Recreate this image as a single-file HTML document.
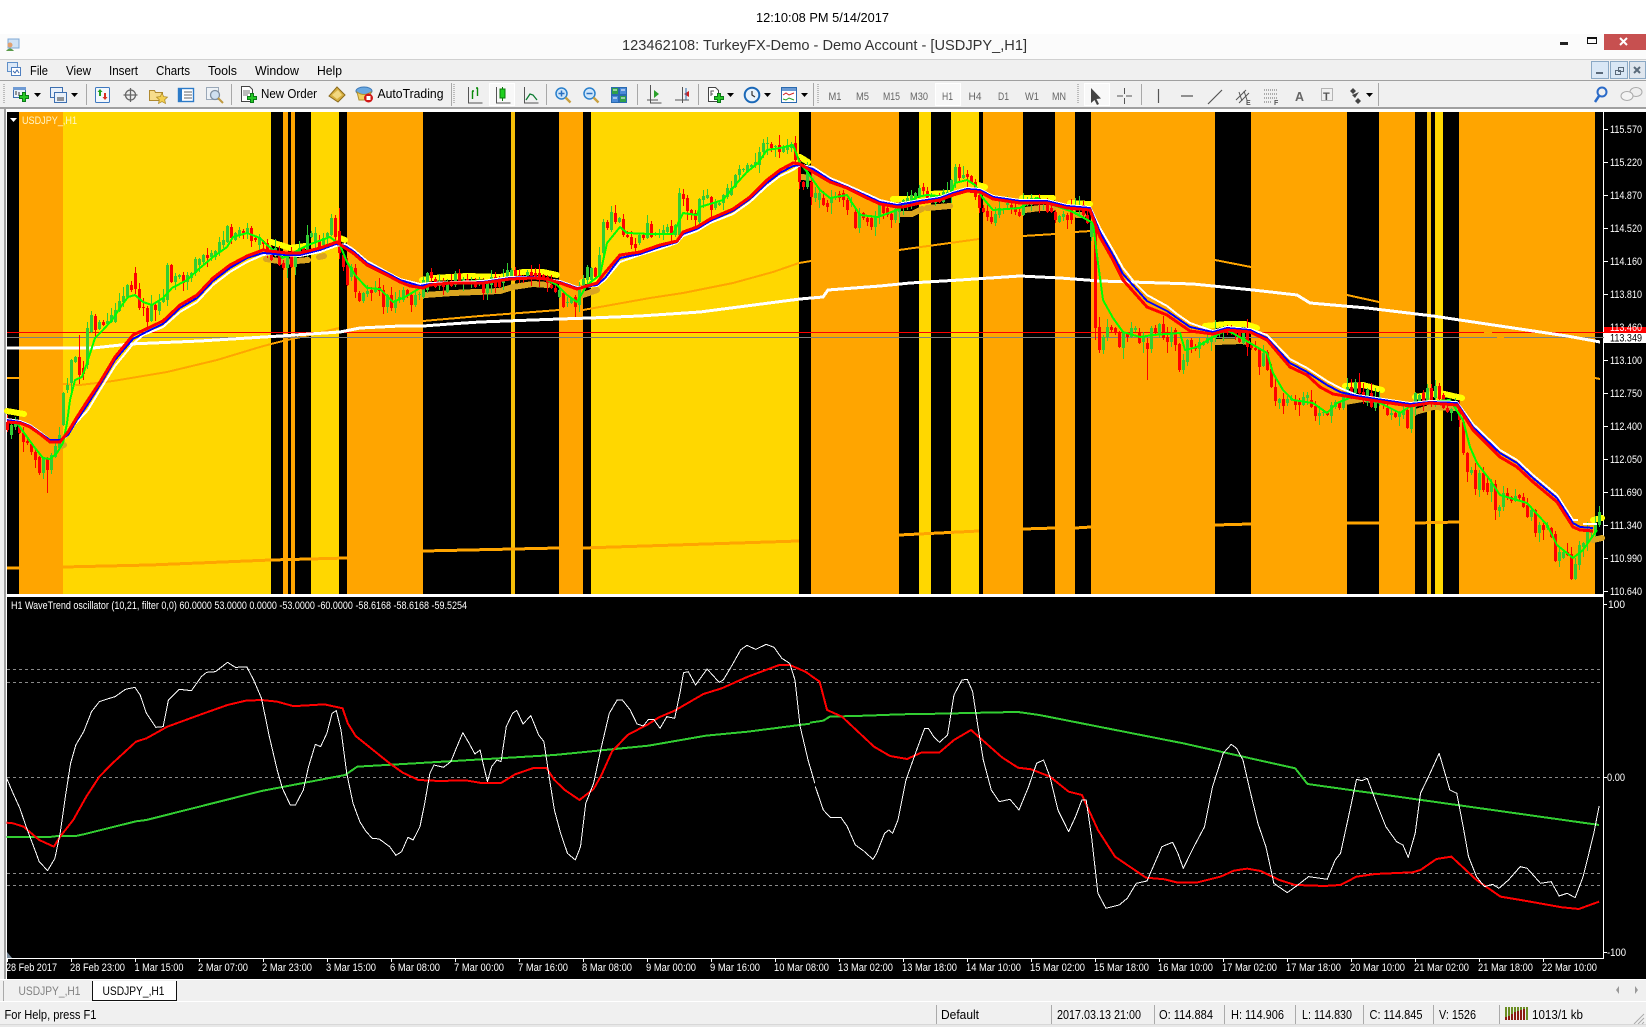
<!DOCTYPE html>
<html><head><meta charset="utf-8"><title>USDJPY H1</title>
<style>
html,body{margin:0;padding:0;background:#fff;width:1646px;height:1027px;overflow:hidden}
svg{display:block;font-family:"Liberation Sans",Arial,sans-serif}
.ax{fill:#fff;font-size:11px}
.mn{fill:#000;font-size:13px}
.tf{fill:#666;font-size:11px}
polyline{fill:none;stroke-linejoin:round;shape-rendering:crispEdges}
.vn{vector-effect:non-scaling-stroke}
</style></head><body>
<svg xmlns="http://www.w3.org/2000/svg" width="1646" height="1027" viewBox="0 0 1646 1027">
<defs>
<path id="plus" d="M3.5.5h3v3h3v3h-3v3h-3v-3h-3v-3h3z" fill="#26c826" stroke="#0b7a18"/>
<path id="dd" d="M0 0h7l-3.5 4z" fill="#000"/>
</defs>
<rect width="1646" height="1027" fill="#f0f0f0"/>
<rect width="1646" height="34" fill="#fff"/>
<rect y="34" width="1646" height="25" fill="#fbfbfb"/>
<rect y="59" width="1646" height="1" fill="#d0d0d0"/>
<rect y="80" width="1646" height="1" fill="#a0a0a0"/>
<rect y="107" width="1646" height="2" fill="#a0a0a0"/>
<text x="756" y="22" font-size="13" fill="#000" textLength="133" lengthAdjust="spacingAndGlyphs">12:10:08 PM 5/14/2017</text>
<text x="622" y="50" font-size="15" fill="#333" textLength="405" lengthAdjust="spacingAndGlyphs">123462108: TurkeyFX-Demo - Demo Account - [USDJPY_,H1]</text>
<!-- app icon -->
<g transform="translate(5,38)"><rect x="3" y="1" width="11" height="9" fill="#cfe2f5" stroke="#7fa8d4"/><circle cx="5" cy="7" r="2.5" fill="#e0a070"/><path d="M1 13q4-5 8 0z" fill="#5a9a4a"/></g>
<!-- window buttons -->
<rect x="1560" y="42" width="8" height="3" fill="#222"/>
<rect x="1587.5" y="37.5" width="9" height="6" fill="none" stroke="#111"/><rect x="1587" y="37" width="10" height="2" fill="#111"/>
<rect x="1604" y="34" width="42" height="16" fill="#c75050"/>
<path d="M1620 38l7 7M1627 38l-7 7" stroke="#fff" stroke-width="2"/>
<!-- menu -->
<g transform="translate(7,62)"><rect x=".5" y=".5" width="10" height="9" fill="#dbe8f7" stroke="#5f8fc8"/><rect x="4.5" y="5.5" width="9" height="8" fill="#fff" stroke="#4f7fc0"/><path d="M6 9l2 2 2-3 2 3" stroke="#3a6ab0" fill="none"/></g>
<g class="mn">
<text x="30" y="75" textLength="18" lengthAdjust="spacingAndGlyphs">File</text>
<text x="66" y="75" textLength="25" lengthAdjust="spacingAndGlyphs">View</text>
<text x="109" y="75" textLength="29" lengthAdjust="spacingAndGlyphs">Insert</text>
<text x="156" y="75" textLength="34" lengthAdjust="spacingAndGlyphs">Charts</text>
<text x="208" y="75" textLength="29" lengthAdjust="spacingAndGlyphs">Tools</text>
<text x="255" y="75" textLength="44" lengthAdjust="spacingAndGlyphs">Window</text>
<text x="317" y="75" textLength="25" lengthAdjust="spacingAndGlyphs">Help</text>
</g>
<!-- MDI buttons -->
<g stroke="#8aa8c4" fill="#d9e7f5"><rect x="1591.5" y="61.5" width="17" height="17"/><rect x="1610.5" y="61.5" width="17" height="17"/><rect x="1629.5" y="61.5" width="16" height="17" fill="#dfe6ee"/></g>
<rect x="1596" y="72" width="7" height="2" fill="#5a6a7a"/>
<path d="M1618.5 67.5h5v4h-5zM1615.5 70.5h5v4h-5z" fill="#d9e7f5" stroke="#5a6a7a"/>
<path d="M1634 67l6 6M1640 67l-6 6" stroke="#5a6a7a" stroke-width="2"/>
<!-- toolbar separators -->
<g fill="#a8a8a8">
<rect x="86" y="84" width="1" height="21"/><rect x="231" y="84" width="1" height="21"/><rect x="546" y="84" width="1" height="21"/><rect x="637" y="84" width="1" height="21"/><rect x="698" y="84" width="1" height="21"/><rect x="813" y="83" width="1" height="23"/><rect x="1141" y="84" width="1" height="21"/><rect x="1378" y="83" width="1" height="23"/><rect x="451" y="83" width="1" height="23"/>
</g>
<path d="M4 84v20M454 84v20M818 84v20M1078 84v20" stroke="#bbb" stroke-width="2" stroke-dasharray="1 1"/>
<!-- highlighted buttons -->
<g fill="#f8f8f8" stroke="#fff"><rect x="489.5" y="83.5" width="25" height="22"/><rect x="935.5" y="83.5" width="25" height="22"/><rect x="1084.5" y="83.5" width="25" height="22"/></g>
<!-- new chart -->
<g transform="translate(13,87)"><rect x=".5" y=".5" width="12" height="10" fill="#eaf2fb" stroke="#3d6fb0"/><rect x="0" y="0" width="13" height="3" fill="#6f9bd4"/><path d="M3 8V4M6 9V5" stroke="#333"/><use href="#plus" x="6" y="5"/></g>
<use href="#dd" x="34" y="93"/>
<g transform="translate(50,87)"><rect x=".5" y=".5" width="12" height="10" fill="#e8f0fa" stroke="#3d6fb0"/><rect x="4.5" y="5.5" width="12" height="10" fill="#e8f0fa" stroke="#3d6fb0"/><path d="M7 11h7M7 13h7" stroke="#333"/></g>
<use href="#dd" x="71" y="93"/>
<!-- market watch -->
<g transform="translate(95,87)"><rect x=".5" y=".5" width="14" height="15" fill="#f2f7fd" stroke="#3d78c0" rx="1"/><path d="M4 9V5H2.5l2.5-3 2.5 3H6v4z" fill="#1ea01e"/><path d="M9 6v4H7.5l2.5 3 2.5-3H11V6z" fill="#d83020"/></g>
<!-- navigator crosshair -->
<g transform="translate(123,87)" fill="none" stroke="#666" stroke-width="1.3"><circle cx="7.5" cy="8" r="5"/><path d="M7.5 1v14M.5 8h14"/></g>
<!-- folder star -->
<g transform="translate(149,87)"><path d="M.5 3.5h5l1 2h7v8H.5z" fill="#f6dc8c" stroke="#b08a30"/><path d="M13 6l1.7 3.6 3.8.5-2.8 2.6.8 3.8-3.5-1.9-3.5 1.9.8-3.8-2.8-2.6 3.8-.5z" fill="#f3cf50" stroke="#a88420" stroke-width=".7"/></g>
<!-- book -->
<g transform="translate(178,87)"><rect x=".5" y="1.5" width="15" height="13" fill="#fff" stroke="#2d7bc8" stroke-width="1.4"/><rect x="1" y="2" width="3" height="12" fill="#2d7bc8"/><path d="M6 5h8M6 8h8M6 11h8" stroke="#666"/></g>
<!-- strategy tester -->
<g transform="translate(206,87)"><rect x=".5" y=".5" width="12" height="12" fill="#eef2f6" stroke="#9aa8b8"/><circle cx="9" cy="8" r="4.5" fill="#cfe0f0" stroke="#7f8fa0" stroke-width="1.3"/><path d="M12 11l5 5" stroke="#c09a40" stroke-width="2"/></g>
<!-- new order -->
<g transform="translate(241,86)"><path d="M.5.5h8l3 3v12H.5z" fill="#fff" stroke="#444"/><path d="M2 5h7M2 7h7M2 9h5" stroke="#777"/><use href="#plus" x="6" y="7"/></g>
<text x="261" y="98" font-size="12.5" fill="#000" textLength="56" lengthAdjust="spacingAndGlyphs">New Order</text>
<!-- history diamond -->
<path d="M337 87l8 8-7 7-9-6z" fill="#d8b040" stroke="#8a6a1c"/><path d="M332 95l6-5 4 5-5 4z" fill="#f2d880"/>
<!-- autotrading -->
<g transform="translate(356,86)"><ellipse cx="8" cy="5" rx="8" ry="4" fill="#6aa8e0" stroke="#3a78b8"/><path d="M1 6q7 5 14 0l-2 8H3z" fill="#f0d060" stroke="#b09030"/><circle cx="12.5" cy="12" r="4.5" fill="#d01818"/><rect x="10.5" y="10" width="4" height="4" fill="#fff"/></g>
<text x="377.5" y="98" font-size="12.5" fill="#000" textLength="66" lengthAdjust="spacingAndGlyphs">AutoTrading</text>
<!-- chart types -->
<g fill="none" stroke="#555"><path d="M468.5 87v16h14M463 103h0"/><path d="M496.5 87v16h14"/><path d="M524.5 87v16h14"/></g>
<path d="M472.5 99v-8M477.5 96v-8M472 91h2M476 88h2" stroke="#0a8a0a" stroke-width="1.4" fill="none"/>
<path d="M502.5 87v14" stroke="#0a7a0a"/><rect x="500" y="89" width="5" height="9" fill="#20d020" stroke="#0a7a0a"/>
<path d="M526 100l4-6 3 1 4 5" stroke="#0a7a30" fill="none" stroke-width="1.3"/>
<!-- zoom -->
<g transform="translate(555,87)"><circle cx="6.5" cy="6.5" r="5.5" fill="#cfe6fa" stroke="#2a80cc" stroke-width="1.5"/><path d="M3.5 6.5h6M6.5 3.5v6" stroke="#2a70c0" stroke-width="1.5"/><path d="M10.5 10.5l5 5" stroke="#c8a040" stroke-width="2.4"/></g>
<g transform="translate(583,87)"><circle cx="6.5" cy="6.5" r="5.5" fill="#cfe6fa" stroke="#2a80cc" stroke-width="1.5"/><path d="M3.5 6.5h6" stroke="#2a70c0" stroke-width="1.5"/><path d="M10.5 10.5l5 5" stroke="#c8a040" stroke-width="2.4"/></g>
<!-- tile -->
<g transform="translate(611,87)" stroke="#2a6ab0"><rect x=".5" y=".5" width="7" height="7" fill="#2fa04a"/><rect x="8.5" y=".5" width="7" height="7" fill="#4a8ad8"/><rect x=".5" y="8.5" width="7" height="7" fill="#4a8ad8"/><rect x="8.5" y="8.5" width="7" height="7" fill="#2fa04a"/><path d="M2 3h4M10 3h4M2 11h4M10 11h4" stroke="#fff"/></g>
<!-- autoscroll & shift -->
<path d="M650.5 85v18h11M647 100h11M675 100h14M682.5 87v16" stroke="#555" fill="none"/>
<path d="M654 90l5 4-5 4z" fill="#2aa02a"/><path d="M689 91v6l-5-3z" fill="#d02020"/><path d="M686 88v12" stroke="#2a6ab0"/>
<!-- indicators -->
<g transform="translate(708,87)"><path d="M.5.5h7l3 3v11H.5z" fill="#fff" stroke="#444"/><path d="M3 9V4h3M3 7h2" stroke="#555" fill="none"/><use href="#plus" x="6" y="6"/></g>
<use href="#dd" x="727" y="93"/>
<!-- clock -->
<g transform="translate(744,87)"><circle cx="8" cy="8" r="7.3" fill="#e8f2fb" stroke="#1a68b8" stroke-width="2"/><path d="M8 4v4l3 2" stroke="#333" fill="none" stroke-width="1.2"/></g>
<use href="#dd" x="764" y="93"/>
<!-- templates -->
<g transform="translate(781,87)"><rect x=".5" y=".5" width="15" height="15" fill="#fff" stroke="#2a6ab0"/><rect x="1" y="1" width="14" height="3" fill="#6a9ad4"/><path d="M2 8l3-2 3 2 5-2" stroke="#d02020" fill="none"/><path d="M2 12l3 1 3-2 5 2" stroke="#20a020" fill="none"/></g>
<use href="#dd" x="801" y="93"/>
<!-- timeframes -->
<g class="tf">
<text x="828.5" y="100" textLength="13" lengthAdjust="spacingAndGlyphs">M1</text>
<text x="856" y="100" textLength="13" lengthAdjust="spacingAndGlyphs">M5</text>
<text x="883" y="100" textLength="17" lengthAdjust="spacingAndGlyphs">M15</text>
<text x="910" y="100" textLength="18" lengthAdjust="spacingAndGlyphs">M30</text>
<text x="942" y="100" textLength="11" lengthAdjust="spacingAndGlyphs">H1</text>
<text x="968.5" y="100" textLength="13" lengthAdjust="spacingAndGlyphs">H4</text>
<text x="998" y="100" textLength="11" lengthAdjust="spacingAndGlyphs">D1</text>
<text x="1025" y="100" textLength="14" lengthAdjust="spacingAndGlyphs">W1</text>
<text x="1052" y="100" textLength="14" lengthAdjust="spacingAndGlyphs">MN</text>
</g>
<!-- draw tools -->
<path d="M1091 88l0 15 3.5-3 2.5 5 2-1-2.500-5 4.500-.5z" fill="#444"/>
<path d="M1124.500 88v6M1124.500 98v6M1117 96h6M1126 96h6" stroke="#555" fill="none"/>
<path d="M1158.500 89v14M1181 96h12M1208 104l14-14" stroke="#555" fill="none" stroke-width="1.2"/>
<path d="M1236 100l10-10M1239 103l10-10M1239 92l3 9M1244 91l3 9" stroke="#555" fill="none"/>
<text x="1246" y="105" font-size="7" font-weight="bold" fill="#555">E</text>
<path d="M1264 90h13M1264 94h13M1264 98h13M1264 102h8" stroke="#666" stroke-dasharray="1 1"/>
<text x="1274" y="105" font-size="7" font-weight="bold" fill="#555">F</text>
<text x="1295" y="101" font-size="13" font-weight="bold" fill="#666" textLength="9" lengthAdjust="spacingAndGlyphs">A</text>
<rect x="1321.500" y="88.500" width="11" height="12" fill="none" stroke="#777" stroke-dasharray="1 1"/>
<text x="1323" y="100" font-size="11" font-weight="bold" fill="#555">T</text>
<path d="M1353 88l3 3-3 3-3-3zM1358 98l3 3-3 3-3-3zM1352 95l3 3 4-6" fill="#444"/>
<use href="#dd" x="1366" y="93"/>
<circle cx="1602" cy="92" r="4.500" fill="none" stroke="#2a6ac8" stroke-width="2"/><path d="M1599 96l-4 6" stroke="#2a6ac8" stroke-width="2.500"/>
<ellipse cx="1636" cy="92" rx="6" ry="4.500" fill="#eee" stroke="#aaa"/><ellipse cx="1627" cy="96" rx="6" ry="4.500" fill="#f4f4f4" stroke="#aaa"/>

<!-- chart frame -->
<rect x="4" y="109" width="1642" height="872" fill="#fff"/>
<rect x="4" y="109" width="2" height="872" fill="#a0a0a0"/>
<rect x="7" y="112" width="1639" height="482" fill="#000"/>
<rect x="7" y="597" width="1639" height="382" fill="#000"/>
<rect x="1604" y="594" width="42" height="3" fill="#000"/>
<rect x="1603" y="111" width="1" height="483" fill="#fff"/>
<rect x="1603" y="597" width="1" height="361" fill="#fff"/>
<rect x="7" y="594" width="1596" height="1" fill="#fff"/><rect x="7" y="596" width="1597" height="1" fill="#fff"/>

<!-- background bands -->
<g shape-rendering="crispEdges">
<g fill="#ffa500">
<rect x="19" y="112" width="44" height="482"/><rect x="283" y="112" width="5" height="482"/><rect x="291" y="112" width="4" height="482"/><rect x="347" y="112" width="76" height="482"/><rect x="559" y="112" width="24" height="482"/><rect x="811" y="112" width="88" height="482"/><rect x="983" y="112" width="40" height="482"/><rect x="1055" y="112" width="20" height="482"/><rect x="1091" y="112" width="124" height="482"/><rect x="1251" y="112" width="96" height="482"/><rect x="1379" y="112" width="36" height="482"/><rect x="1459" y="112" width="136" height="482"/>
</g>
<g fill="#ffd700">
<rect x="63" y="112" width="208" height="482"/><rect x="311" y="112" width="28" height="482"/><rect x="591" y="112" width="208" height="482"/><rect x="919" y="112" width="12" height="482"/><rect x="951" y="112" width="28" height="482"/><rect x="1435" y="112" width="8" height="482"/>
</g>
<g fill="#f7bf08"><rect x="511" y="112" width="4" height="482"/><rect x="1427" y="112" width="4" height="482"/></g>
</g>

<!-- long orange MA -->
<g stroke="#ffa500" stroke-width="2">
<polyline points="7,378 19,378"/>
<polyline points="63,384 80,385 113,381 167,372 217,360 260,347 271,344"/>
<polyline points="271,344 287,340 310,335 339,328"/>
<polyline points="423,321 480,316 559,310"/>
<polyline points="583,310 650,298 683,293 733,283 773,272 799,263 811,261"/>
<polyline points="899,250 979,239"/><polyline points="1023,236 1055,234"/><polyline points="1075,232 1091,231"/>
<polyline points="1215,260 1251,267"/><polyline points="1347,295 1379,302"/><polyline points="1595,378 1600,379"/>
</g>
<g stroke="#ffa500" stroke-width="3">
<polyline points="7,568 19,568"/>
<polyline points="63,567 150,565 271,560 347,558"/>
<polyline points="423,551 559,548"/><polyline points="583,548 799,541"/>
<polyline points="899,535 979,531"/><polyline points="1023,529 1055,528"/><polyline points="1075,528 1091,527"/>
<polyline points="1215,525 1251,524"/><polyline points="1347,523 1379,523"/><polyline points="1415,523 1459,522"/>
</g>
<!-- gold / yellow envelope -->
<g stroke="#daa520" stroke-width="6" stroke-linecap="round">
<polyline points="62,446 64,445"/>
<polyline points="266,259 285,262 308,260"/><polyline points="319,257 324,256"/>
<polyline points="425,295 453,293 500,291 513,287 533,284 548,285"/><polyline points="583,295 597,290"/>
<polyline points="802,177 812,178"/>
<polyline points="898,214 912,214 922,209"/><polyline points="927,208 950,206"/>
<polyline points="1025,210 1040,208 1053,208"/><polyline points="1077,215 1083,215"/>
<polyline points="1215,342 1243,341 1247,342"/>
<polyline points="1345,402 1363,399 1372,400"/>
<polyline points="1415,412 1433,407 1457,408"/>
<polyline points="1593,540 1602,538"/>
</g>
<g stroke="#ffff00" stroke-width="6" stroke-linecap="round">
<polyline points="7,411 24,414"/>
<polyline points="271,242 290,248 305,246"/><polyline points="340,238 345,240"/>
<polyline points="422,280 433,278 467,276 500,277 523,272 543,272 557,275"/><polyline points="582,282 598,278"/>
<polyline points="800,157 808,162"/>
<polyline points="893,199 916,199"/><polyline points="928,194 950,193"/><polyline points="978,185 985,187"/>
<polyline points="1022,198 1053,198"/><polyline points="1070,203 1090,204"/>
<polyline points="1205,326 1227,324 1245,324 1257,328"/>
<polyline points="1345,386 1363,385 1382,390"/>
<polyline points="1415,397 1440,393 1462,398"/>
<polyline points="1593,520 1602,518"/>
</g>
<!-- horizontal price lines -->
<path d="M7 332.500H1484M1492 332.500H1604" stroke="#f00" stroke-width="1"/>
<path d="M7 337.500H1497M1504 337.500H1604" stroke="#808080" stroke-width="1"/>
<!-- long white MA -->
<polyline stroke="#fff" stroke-width="3" points="7,348 93,348 130,344 200,341 280,336 340,332 360,328 400,326 423,326 450,324 480,322 533,320 560,319 590,318 640,316 700,312 800,299 823,297 828,290 880,286 910,283 960,280 1020,276 1060,278 1100,281 1193,284 1253,290 1297,295 1310,303 1367,308 1433,316 1500,326 1567,336 1600,342"/>
<g id="candles" shape-rendering="crispEdges"></g>
<!-- green fast line -->
<polyline stroke="#0f0" stroke-width="2" points="7,420 17,423 27,437 35,448 43,458 50,459 57,453 63,443 67,423 70,400 75,380 82,377 87,363 95,338 103,330 112,320 122,305 128,297 135,295 143,302 152,305 163,298 172,288 187,280 200,268 213,257 227,247 233,237 247,233 260,238 267,245 283,258 293,253 308,245 330,237 340,245 347,262 355,275 367,288 380,289 393,302 405,297 420,288 433,283 500,280 543,278 557,285 567,295 577,302 587,285 600,275 607,243 620,227 627,233 650,234 673,234 683,213 697,215 700,207 723,200 737,183 747,172 758,163 767,150 780,148 793,145 800,163 808,173 820,190 830,198 847,195 860,215 878,217 897,210 917,197 927,195 950,197 955,183 967,180 975,185 982,197 993,210 1020,208 1037,198 1053,205 1073,212 1093,223 1098,263 1103,300 1113,318 1123,332 1140,337 1153,335 1180,333 1185,350 1197,347 1213,337 1227,330 1250,343 1267,353 1273,373 1283,390 1293,400 1313,403 1327,413 1337,403 1357,395 1380,403 1400,413 1415,403 1450,400 1463,420 1470,447 1477,463 1490,480 1500,495 1527,503 1547,525 1557,545 1573,558 1583,550 1597,530"/>
<!-- white/blue/red MA triple -->
<polyline stroke="#fff" stroke-width="2" points="7,419 20,421 30,425 40,432 50,440 60,440 66,437 75,424 88,410 100,390 115,366 133,344 143,335 163,327 180,312 197,302 213,285 230,272 247,262 263,255 270,254 300,256 320,252 336,246 345,244 353,249 367,261 387,272 400,279 420,284 430,283 483,281 510,277 533,277 560,281 577,287 597,286 605,280 620,262 640,255 660,249 677,243 683,236 697,231 710,223 733,214 750,202 767,186 780,176 793,170 800,165 813,167 830,178 847,185 867,194 880,200 897,204 920,200 940,197 953,192 967,188 980,189 993,196 1020,200 1047,200 1067,205 1090,207 1100,228 1113,250 1123,268 1135,283 1147,295 1167,306 1177,314 1190,323 1213,331 1227,327 1250,329 1267,335 1290,359 1307,368 1327,381 1340,388 1357,395 1383,399 1410,403 1430,401 1457,402 1473,424 1500,450 1517,460 1533,475 1557,495 1573,520 1578,520"/>
<polyline stroke="#fff" stroke-width="2" points="1583,524 1597,524"/>
<polyline stroke="#00f" stroke-width="2" points="7,420 20,422 30,426 40,433 50,440 60,440 68,435 77,420 86,407 100,385 115,360 133,339 146,332 163,324 180,308 197,298 213,281 230,268 247,258 263,253 286,255 300,255 320,250 336,244 345,246 353,251 367,263 387,273 400,280 420,286 430,284 483,282 510,278 533,277 560,282 577,288 597,285 605,278 620,258 640,254 660,247 677,242 683,234 697,229 710,221 733,211 750,199 767,183 780,173 793,166 800,165 813,169 830,180 847,187 867,196 880,202 897,205 920,201 940,198 953,193 967,189 980,190 993,197 1020,201 1047,201 1067,206 1090,208 1100,232 1113,255 1123,274 1147,301 1167,311 1177,318 1190,327 1213,332 1227,328 1250,330 1267,338 1290,363 1307,372 1327,385 1340,392 1357,396 1383,400 1410,404 1430,402 1457,403 1473,427 1500,453 1517,463 1533,478 1557,498 1573,523 1580,527 1593,528"/>
<polyline stroke="#f00" stroke-width="3" points="7,422 20,423 30,427 40,434 50,442 60,442 68,432 77,417 86,403 100,382 115,357 133,335 146,329 163,321 180,305 197,295 213,278 230,265 247,256 263,250 270,251 287,253 300,253 320,248 337,242 345,248 353,253 367,265 387,275 400,282 410,286 423,288 430,285 450,283 483,283 510,279 533,278 547,279 560,283 577,289 597,283 603,275 620,255 640,252 660,245 677,241 683,232 697,227 710,219 733,209 750,197 767,180 780,170 793,163 800,164 813,172 830,182 847,188 867,198 880,204 897,207 903,207 920,203 940,200 953,195 967,191 980,192 993,199 1020,203 1047,203 1067,208 1090,210 1100,237 1113,260 1123,280 1147,307 1167,315 1177,322 1190,331 1213,334 1227,330 1250,332 1267,340 1290,367 1307,375 1320,387 1333,394 1357,398 1383,402 1410,406 1430,403 1457,405 1473,430 1500,457 1517,467 1533,482 1557,502 1573,527 1580,530 1593,531"/>

<!-- chart labels -->
<path d="M10 118h7l-3.500 4z" fill="#fff"/>
<text x="22" y="124" font-size="11" fill="#fff5c8" textLength="55" lengthAdjust="spacingAndGlyphs">USDJPY_,H1</text>

<!-- price axis -->
<g fill="#fff">
<rect x="1604" y="129" width="4" height="1"/><rect x="1604" y="162" width="4" height="1"/><rect x="1604" y="195" width="4" height="1"/><rect x="1604" y="228" width="4" height="1"/><rect x="1604" y="261" width="4" height="1"/><rect x="1604" y="294" width="4" height="1"/><rect x="1604" y="360" width="4" height="1"/><rect x="1604" y="393" width="4" height="1"/><rect x="1604" y="426" width="4" height="1"/><rect x="1604" y="459" width="4" height="1"/><rect x="1604" y="492" width="4" height="1"/><rect x="1604" y="525" width="4" height="1"/><rect x="1604" y="558" width="4" height="1"/><rect x="1604" y="591" width="4" height="1"/>
</g>
<rect x="1604" y="327" width="42" height="6" fill="#f00"/>
<g class="ax">
<text x="1610" y="133" textLength="32" lengthAdjust="spacingAndGlyphs">115.570</text>
<text x="1610" y="166" textLength="32" lengthAdjust="spacingAndGlyphs">115.220</text>
<text x="1610" y="199" textLength="32" lengthAdjust="spacingAndGlyphs">114.870</text>
<text x="1610" y="232" textLength="32" lengthAdjust="spacingAndGlyphs">114.520</text>
<text x="1610" y="265" textLength="32" lengthAdjust="spacingAndGlyphs">114.160</text>
<text x="1610" y="298" textLength="32" lengthAdjust="spacingAndGlyphs">113.810</text>
<text x="1610" y="331" textLength="32" lengthAdjust="spacingAndGlyphs">113.460</text>
<text x="1610" y="364" textLength="32" lengthAdjust="spacingAndGlyphs">113.100</text>
<text x="1610" y="397" textLength="32" lengthAdjust="spacingAndGlyphs">112.750</text>
<text x="1610" y="430" textLength="32" lengthAdjust="spacingAndGlyphs">112.400</text>
<text x="1610" y="463" textLength="32" lengthAdjust="spacingAndGlyphs">112.050</text>
<text x="1610" y="496" textLength="32" lengthAdjust="spacingAndGlyphs">111.690</text>
<text x="1610" y="529" textLength="32" lengthAdjust="spacingAndGlyphs">111.340</text>
<text x="1610" y="562" textLength="32" lengthAdjust="spacingAndGlyphs">110.990</text>
<text x="1610" y="595" textLength="32" lengthAdjust="spacingAndGlyphs">110.640</text>
</g>
<rect x="1604" y="333" width="42" height="10" fill="#fff"/>
<text x="1610" y="341.500" font-size="11" fill="#000" textLength="32" lengthAdjust="spacingAndGlyphs">113.349</text>

<!-- oscillator -->
<text x="11" y="609" font-size="11" fill="#fff" textLength="456" lengthAdjust="spacingAndGlyphs">H1 WaveTrend oscillator (10,21, filter 0,0) 60.0000 53.0000 0.0000 -53.0000 -60.0000 -58.6168 -58.6168 -59.5254</text>
<path d="M7 669.500H1600M7 682.500H1600M7 777.500H1600M7 873.500H1600M7 885.500H1600" stroke="#8a8a8a" stroke-width="1" stroke-dasharray="3 3"/>
<g transform="translate(0,620) scale(.523,.3333)">
<polyline class="vn" stroke="#32cd32" stroke-width="2" points="12,651 95,651 110,648 145,648 160,643 260,604 280,600 500,513 530,504 660,465 683,440 750,434 900,420 1060,405 1240,377 1350,347 1430,335 1549,311"/>
<polyline class="vn" stroke="#f00" stroke-width="2" points="12,608 25,610 45,620 75,660 103,680 115,650 140,600 165,530 190,470 215,430 260,365 280,355 320,320 390,280 435,255 470,242 500,240 530,245 560,258 580,257 620,253 655,265 665,310 680,348 745,430 770,458 800,480 840,483 890,481 920,489 958,489 985,463 1020,444 1045,444 1060,480 1080,510 1108,540 1135,507 1150,465 1170,395 1200,345 1240,312 1260,292 1290,272 1345,222 1380,205 1430,170 1490,135 1510,135 1540,155 1549,165"/>
<polyline class="vn" stroke="#fff" stroke-width="1" points="12,472 25,520 38,565 50,620 62,670 75,725 91,752 105,715 115,640 125,530 135,430 145,375 160,335 175,275 190,245 205,237 220,230 240,208 258,202 268,225 280,280 298,322 312,320 322,240 332,225 343,208 366,212 385,170 395,157 412,155 435,127 450,142 472,141 485,180 500,235 515,350 530,450 540,505 555,555 565,555 580,510 590,440 603,373 613,380 625,340 635,280 643,272 652,330 663,460 675,550 688,605 700,635 712,655 725,657 745,680 757,706 768,695 780,652 790,660 803,620 812,550 822,460 830,435 848,442 862,425 875,375 885,338 897,370 908,402 918,390 925,440 932,485 940,440 950,420 958,425 968,320 980,280 988,271 1000,312 1015,287 1030,345 1040,365 1050,470 1060,570 1072,640 1085,700 1100,720 1110,680 1120,550 1135,490 1150,380 1165,280 1180,240 1190,240 1205,270 1218,312 1230,318 1240,298 1250,298 1262,325 1275,290 1290,295 1300,220 1307,158 1316,155 1330,195 1352,147 1375,187 1383,180 1400,135 1416,90 1428,76 1445,88 1465,73 1480,82 1495,115 1510,130 1520,180 1530,320 1545,420 1558,490"/>
</g>
<g transform="translate(810,620) scale(.5332,.3333)">
<polyline class="vn" stroke="#32cd32" stroke-width="2" points="0,308 25,302 37,290 105,287 170,283 245,281 355,277 390,276 430,285 700,370 910,445 933,492 1480,615"/>
<polyline class="vn" stroke="#f00" stroke-width="2" points="0,165 18,185 32,270 60,290 120,380 150,408 182,417 210,397 243,397 270,360 302,330 360,412 390,443 415,448 450,470 485,515 510,525 540,630 572,710 630,773 665,778 690,788 725,788 770,770 795,752 820,746 845,753 880,780 910,795 965,798 995,795 1025,770 1060,762 1130,757 1145,750 1175,717 1203,710 1250,780 1295,830 1340,842 1410,862 1442,867 1480,845"/>
<polyline class="vn" stroke="#fff" stroke-width="1" points="10,500 25,570 38,592 58,592 70,620 85,675 100,692 118,718 125,700 140,640 148,630 155,640 165,600 180,480 200,390 215,325 222,325 232,350 243,367 258,345 270,225 285,180 295,178 305,215 315,320 325,420 340,510 355,545 375,538 392,570 410,500 425,430 438,420 450,470 465,570 485,635 498,590 510,540 518,540 528,650 540,820 555,865 580,855 595,835 612,790 632,783 660,680 680,667 690,700 700,745 720,680 740,620 755,500 775,400 790,373 800,385 812,420 825,510 840,610 855,680 870,790 895,818 915,795 935,770 970,778 985,720 995,700 1010,590 1025,478 1035,482 1045,475 1065,560 1080,620 1100,665 1112,675 1122,712 1135,640 1145,520 1160,470 1180,400 1200,510 1213,520 1225,620 1235,710 1250,770 1265,800 1280,793 1292,805 1310,780 1332,740 1345,745 1370,790 1390,785 1405,828 1420,820 1435,833 1450,770 1470,640 1480,558"/>
</g>
<path d="M7 952l5 6H7z" fill="#789"/>
<g class="ax">
<text x="1608" y="608" textLength="17" lengthAdjust="spacingAndGlyphs">100</text>
<text x="1607" y="781" textLength="18" lengthAdjust="spacingAndGlyphs">0.00</text>
<text x="1607" y="956" textLength="19" lengthAdjust="spacingAndGlyphs">-100</text>
</g>
<rect x="1603" y="777" width="4" height="1" fill="#fff"/><rect x="1603" y="952" width="4" height="1" fill="#fff"/><rect x="1603" y="604" width="4" height="1" fill="#fff"/>

<!-- time axis -->
<rect x="7" y="958" width="1597" height="1" fill="#fff"/>
<path d="M7.500 958v4M71.500 958v4M135.500 958v4M199.500 958v4M263.500 958v4M327.500 958v4M391.500 958v4M455.500 958v4M519.500 958v4M583.500 958v4M647.500 958v4M711.500 958v4M775.500 958v4M839.500 958v4M903.500 958v4M967.500 958v4M1031.500 958v4M1095.500 958v4M1159.500 958v4M1223.500 958v4M1287.500 958v4M1351.500 958v4M1415.500 958v4M1479.500 958v4M1543.500 958v4" stroke="#fff"/>
<g class="ax">
<text x="6" y="971" textLength="51" lengthAdjust="spacingAndGlyphs">28 Feb 2017</text>
<text x="70" y="971" textLength="55" lengthAdjust="spacingAndGlyphs">28 Feb 23:00</text>
<text x="134.500" y="971" textLength="49" lengthAdjust="spacingAndGlyphs">1 Mar 15:00</text>
<text x="198" y="971" textLength="50" lengthAdjust="spacingAndGlyphs">2 Mar 07:00</text>
<text x="262" y="971" textLength="50" lengthAdjust="spacingAndGlyphs">2 Mar 23:00</text>
<text x="326" y="971" textLength="50" lengthAdjust="spacingAndGlyphs">3 Mar 15:00</text>
<text x="390" y="971" textLength="50" lengthAdjust="spacingAndGlyphs">6 Mar 08:00</text>
<text x="454" y="971" textLength="50" lengthAdjust="spacingAndGlyphs">7 Mar 00:00</text>
<text x="518" y="971" textLength="50" lengthAdjust="spacingAndGlyphs">7 Mar 16:00</text>
<text x="582" y="971" textLength="50" lengthAdjust="spacingAndGlyphs">8 Mar 08:00</text>
<text x="646" y="971" textLength="50" lengthAdjust="spacingAndGlyphs">9 Mar 00:00</text>
<text x="710" y="971" textLength="50" lengthAdjust="spacingAndGlyphs">9 Mar 16:00</text>
<text x="774" y="971" textLength="55" lengthAdjust="spacingAndGlyphs">10 Mar 08:00</text>
<text x="838" y="971" textLength="55" lengthAdjust="spacingAndGlyphs">13 Mar 02:00</text>
<text x="902" y="971" textLength="55" lengthAdjust="spacingAndGlyphs">13 Mar 18:00</text>
<text x="966" y="971" textLength="55" lengthAdjust="spacingAndGlyphs">14 Mar 10:00</text>
<text x="1030" y="971" textLength="55" lengthAdjust="spacingAndGlyphs">15 Mar 02:00</text>
<text x="1094" y="971" textLength="55" lengthAdjust="spacingAndGlyphs">15 Mar 18:00</text>
<text x="1158" y="971" textLength="55" lengthAdjust="spacingAndGlyphs">16 Mar 10:00</text>
<text x="1222" y="971" textLength="55" lengthAdjust="spacingAndGlyphs">17 Mar 02:00</text>
<text x="1286" y="971" textLength="55" lengthAdjust="spacingAndGlyphs">17 Mar 18:00</text>
<text x="1350" y="971" textLength="55" lengthAdjust="spacingAndGlyphs">20 Mar 10:00</text>
<text x="1414" y="971" textLength="55" lengthAdjust="spacingAndGlyphs">21 Mar 02:00</text>
<text x="1478" y="971" textLength="55" lengthAdjust="spacingAndGlyphs">21 Mar 18:00</text>
<text x="1542" y="971" textLength="55" lengthAdjust="spacingAndGlyphs">22 Mar 10:00</text>
</g>

<!-- tabs -->
<rect x="0" y="979" width="1646" height="1" fill="#fff"/>
<rect x="0" y="980" width="1646" height="22" fill="#f0f0f0"/>
<rect x="3" y="981" width="1" height="20" fill="#aaa"/>
<text x="18.500" y="995" font-size="12" fill="#808080" textLength="62" lengthAdjust="spacingAndGlyphs">USDJPY_,H1</text>
<rect x="92" y="981" width="85" height="19" fill="#fff"/>
<path d="M92.500 981v19.500H176.500V981" fill="none" stroke="#111"/>
<text x="102.500" y="995" font-size="12" fill="#000" textLength="62" lengthAdjust="spacingAndGlyphs">USDJPY_,H1</text>
<path d="M1619 986v8l-3-4zM1635 986v8l3-4z" fill="#999"/>
<rect x="0" y="1001" width="1646" height="1" fill="#fff"/>

<!-- status bar -->
<text x="4.500" y="1019" font-size="12.500" fill="#000" textLength="92" lengthAdjust="spacingAndGlyphs">For Help, press F1</text>
<path d="M936.500 1005v19M1051.500 1005v19M1154.500 1005v19M1224.500 1005v19M1295.500 1005v19M1363.500 1005v19M1433.500 1005v19M1499.500 1005v19" stroke="#aaa"/>
<g font-size="12.500" fill="#000">
<text x="941" y="1019" textLength="38" lengthAdjust="spacingAndGlyphs">Default</text>
<text x="1057" y="1019" textLength="84" lengthAdjust="spacingAndGlyphs">2017.03.13 21:00</text>
<text x="1159" y="1019" textLength="54" lengthAdjust="spacingAndGlyphs">O: 114.884</text>
<text x="1231" y="1019" textLength="53" lengthAdjust="spacingAndGlyphs">H: 114.906</text>
<text x="1302" y="1019" textLength="50" lengthAdjust="spacingAndGlyphs">L: 114.830</text>
<text x="1369.500" y="1019" textLength="53" lengthAdjust="spacingAndGlyphs">C: 114.845</text>
<text x="1439" y="1019" textLength="37" lengthAdjust="spacingAndGlyphs">V: 1526</text>
<text x="1532" y="1019" textLength="51" lengthAdjust="spacingAndGlyphs">1013/1 kb</text>
</g>
<g shape-rendering="crispEdges">
<rect x="1505" y="1007" width="23" height="13" fill="#6b8e23"/>
<path d="M1505 1020v-3h3v-1h3v-2h3v-2h3v-1h3v-1h3v-1h2v11z" fill="#8b1a10"/>
<path d="M1507.500 1007v13M1510.500 1007v13M1513.500 1007v13M1516.500 1007v13M1519.500 1007v13M1522.500 1007v13M1525.500 1007v13" stroke="#f0f0f0"/>
</g>
<path d="M1634 1024l10-10M1638 1024l6-6M1642 1024l2-2" stroke="#aaa"/>
<rect x="0" y="1024" width="1646" height="3" fill="#e8e8e8"/>
<rect x="0" y="1024" width="1646" height="1" fill="#d8d8d8"/>
</svg>
<script>
(function(){
var G=[7,420,17,423,27,437,35,448,43,458,50,459,57,453,63,443,67,423,70,400,75,380,82,377,87,363,95,338,103,330,112,320,122,305,128,297,135,295,143,302,152,305,163,298,172,288,187,280,200,268,213,257,227,247,233,237,247,233,260,238,267,245,283,258,293,253,308,245,330,237,347,262,355,275,367,288,380,289,393,302,405,297,420,288,433,283,500,280,543,278,557,285,567,295,577,302,587,285,600,275,607,243,620,227,627,233,650,234,673,234,683,213,697,215,700,207,723,200,737,183,747,172,758,163,767,150,780,148,793,145,800,163,808,173,820,190,830,198,847,195,860,215,878,217,897,210,917,197,927,195,950,197,955,183,967,180,975,185,982,197,993,210,1020,208,1037,198,1053,205,1073,212,1093,223,1098,263,1103,300,1113,318,1123,332,1140,337,1153,335,1180,333,1185,350,1197,347,1213,337,1227,330,1250,343,1267,353,1273,373,1283,390,1293,400,1313,403,1327,413,1337,403,1357,395,1380,403,1400,413,1415,403,1450,400,1463,420,1470,447,1477,463,1490,480,1500,495,1527,503,1547,525,1557,545,1573,558,1583,550,1597,530];
function g(x){for(var i=0;i<G.length-2;i+=2){if(x<=G[i+2]){return G[i+1]+(G[i+3]-G[i+1])*(x-G[i])/(G[i+2]-G[i]);}}return G[G.length-1];}
var T=[
[0,380,"r24 125 150,g36 135 165,g48 130 140,r58 140 160,r70 158 185,r82 183 190,r94 192 215,r106 215 240,r118 230 280,g130 235 280,r142 235 270,g154 225 270,g166 198 230,g178 165 205,g190 40 135"],
[0,105,"g202 840 855,g214 765 835,g226 755 770,r238 755 810,r250 790 808,g262 670 780,g274 630 680,r286 632 675,g298 652 672,r310 650 660,g322 648 658,g334 630 650,g346 615 650,g358 588 618,g370 573 590,g382 540 575,r394 540 555,r406 503 552,r418 552 610,r430 605 610,r442 608 650,g454 600 648,r466 600 615,g478 590 617,g490 580 590,g502 480 585,r514 480 530,g526 512 530,g538 510 515,r550 510 535,g562 510 530,g574 505 520,g586 462 505,g598 462 480,g610 450 470,r622 450 460,g634 445 455,g646 438 455,g658 410 440,g670 405 420,g682 363 410,r694 365 400,g706 385 405,g718 375 390,r730 378 385,g742 370 385,r754 368 408,r766 400 405,g778 395 420,r790 408 416,r802 415 445,r814 445 465,g826 430 440,r838 450 480,r850 475 490,g862 450 490,r874 445 485,g886 440 485,g898 430 450,r910 430 450,g922 390 445,g934 385 395,g946 383 415,r958 408 425,g970 400 420,g982 385 395,g994 340 390,r1006 340 395,r1018 378 445,r1030 450 485,r1042 480 540,g1054 487 515,r1066 490 560,r1078 563 587,g1090 565 587,g1102 558 568,r1114 555 565,g1126 550 560,r1138 545 557,r1150 555 605,g1162 570 605,r1174 570 610,g1186 585 610,g1198 575 585,g1210 555 585,r1222 560 575,r1234 570 600,g1246 570 600"],
[400,120,"r18 510 525,g70 480 530,g82 458 510,r94 455 475,r106 478 500,g118 490 498,r130 490 500,g142 485 515,r154 485 497,g166 462 495,r178 460 490,g190 478 485,r202 478 490,g214 485 492,r226 482 500,g238 480 492,r250 480 520,g262 490 520,g274 470 495,r286 470 500,r298 485 500,g310 470 490,g322 450 480,g334 450 470,r346 450 470,r358 465 472,r370 468 478,g382 455 475,r394 455 470,r406 458 475,r418 460 470,r430 465 475,r442 470 490,r454 495 505,r466 505 515,g478 510 530,r490 520 560,g502 545 550,g514 535 550,r526 530 560,g538 500 555,g550 478 500,g562 440 480,g574 445 480,r586 445 470,g598 405 470,g610 305 400,r622 305 325,g634 275 330,r646 278 305,g658 295 305,r670 298 345,r682 345 350,r694 350 375,r706 372 385,g718 345 370,r730 345 355,g742 310 355,r754 312 350,g766 340 345,g778 338 342,g790 330 345,g802 320 335,r814 318 345,g826 315 345,g838 220 345,r850 222 238,r862 235 272,r874 270 285,r886 280 300,g898 238 305,g910 228 240,g922 225 235,r934 230 270,g946 250 265,g958 250 255,g970 225 250,g982 205 230,g994 205 225,g1006 165 200,g1018 148 165,g1030 148 150,g1042 135 155,g1054 135 140,g1066 125 135,g1078 95 135,g1090 70 95,g1102 70 72,r1114 72 85,g1126 78 80,r1138 75 95,g1150 85 95,g1162 75 90,g1174 72 85,r1186 70 120,r1198 120 185,r1210 185 200,g1222 155 200,r1234 185 230,g1246 220 235,g1258 220 240,r1270 235 255,r1282 250 260,g1294 230 250,g1306 230 235,r1318 222 235,r1330 218 240,r1342 240 270,g1354 245 250,r1366 275 325,g1378 278 325,r1390 280 295,g1402 295 310,r1414 295 320,g1426 295 320,g1438 250 290"],
[860,140,"r10 218 235,r22 235 245,r34 235 262,g46 228 262,g58 188 230,r70 195 218,r82 205 225,r94 222 240,g106 208 240,g118 195 215,g130 180 205,g142 175 200,g154 165 190,g166 160 180,g178 145 170,r190 140 152,r202 152 178,g214 165 180,g226 168 190,r238 168 185,g250 155 185,g262 155 165,g274 120 170,g286 80 125,r298 82 115,g310 105 115,r322 102 112,r334 108 130,r346 125 170,r358 165 205,r370 205 215,r382 212 232,r394 230 245,g406 222 250,g418 205 225,g430 208 210,g442 190 195,r454 195 205,r466 200 215,r478 215 228,g490 180 225,g502 180 195,g514 175 195,g526 175 180,r538 175 192,g550 180 185,r562 180 215,r574 205 215,r586 215 240,g598 228 245,g610 222 232,r622 225 240,r634 205 240,g646 198 210,g658 195 205,r670 195 225,r682 225 248,g694 250 290,r706 245 565,r718 562 630,g730 590 630,g742 560 590,r754 560 570,r766 565 580,r778 577 620,g790 580 625,r802 580 592,g814 565 590,g826 565 570,r838 575 610,g850 590 605,r862 610 628,g874 565 628,r886 565 580,g898 552 585,r910 552 595,r922 590 605,g934 580 605,r946 570 615,r958 612 690,g970 660 690,g982 600 665,r994 600 620,r1006 620 628,g1018 605 628,g1030 605 615,g1042 595 608,g1054 592 605,g1066 568 595,g1078 568 575,g1090 565 570,r1102 570 580,r1114 565 580,r1126 575 585,r1138 575 605,g1150 565 610,r1162 565 620,r1174 615 625,r1186 625 630,r1198 627 680,g1210 638 678,r1222 635 690,r1234 688 740,r1246 740 782,g1258 778 790,r1270 778 798,g1282 778 790,g1294 775 780,r1306 780 795,r1318 780 795,g1330 765 795,r1342 765 778,r1354 780 800,r1366 798 825,g1378 820 825,g1390 818 828,g1402 820 828,g1414 800 828,g1426 790 810,r1438 788 820"],
[1300,250,"g9 440 465,g21 435 445,r33 450 470,r45 467 497,g57 490 497,g69 485 490,r81 490 495,g93 465 497,g105 455 470,r117 455 475,g129 430 475,g141 410 440,r153 410 430,g165 395 430,r177 395 430,r189 425 450,g201 420 455,r213 430 470,g225 445 475,g237 440 450,r249 460 465,r261 475 495,g273 490 495,r285 490 500,g297 485 500,g309 480 495,r321 480 535,g333 470 538,g345 430 470,g357 435 455,r369 430 455,g381 415 455,r393 415 460,g405 407 445,r417 407 447,r429 435 475,r441 475 485,g453 478 488,g465 465 475,r477 465 510,r489 515 610,r501 610 665,g513 660 670,r525 660 718,g537 670 720,r549 670 720,r561 700 725,g573 700 725,r585 702 780,g597 770 782,g609 730 770,r621 730 745,r633 742 752,g645 738 752,r657 735 745,r669 740 770,r681 765 800,g693 780 802,r705 780 850,g717 825 850,r729 825 840,g741 825 835,r753 835 860,r765 852 932,g777 905 932,g789 905 925,r801 905 915,r813 912 988,g825 942 988,g837 885 945,g849 878 890,g861 845 880,g873 840 850,g885 818 845,g897 785 825"]
];
var M={},s=98765;
function r(){s=(s*16807)%2147483647;return s/2147483647;}
T.forEach(function(t){t[2].split(",").forEach(function(e){var c=e[0],p=e.slice(1).split(" ");var x=t[0]+p[0]/3;var X=4*Math.round((x-3)/4)+3;M[X]=[c,t[1]+p[1]/3,t[1]+p[2]/3];});});
var W={47:[null,493],79:[335,null],1147:[null,380],1095:[null,340],1099:[317,353],135:[267,null],339:[208,null],795:[136,null],1179:[null,372]};
var gw="",gb="",rw="",rb="",prev=g(7);
for(var x=7;x<=1599;x+=4){var m=M[x],c,a,b;
 if(m){c=m[0];a=m[1];b=m[2];}
 else{var t=g(x)+(r()-.5)*14;a=Math.min(prev,t);b=Math.max(prev,t);c=t<prev?"g":"r";}
 if(b-a<1)b=a+1;
 prev=c=="g"?a:b;
 var h=a-1-Math.pow(r(),2)*9,l=b+1+Math.pow(r(),2)*10;
 if(W[x]){if(W[x][0])h=W[x][0];if(W[x][1])l=W[x][1];}
 a=Math.round(a);b=Math.round(b);h=Math.round(h);l=Math.round(l);
 var w="M"+x+" "+h+"h1V"+l+"h-1z",bd="M"+(x-1)+" "+a+"h3V"+b+"h-3z";
 if(c=="g"){gw+=w;gb+=bd;}else{rw+=w;rb+=bd;}
}
var ns="http://www.w3.org/2000/svg",host=document.getElementById("candles");
[[gw,"#32cd32"],[rw,"#f00"],[gb,"#32cd32"],[rb,"#f00"]].forEach(function(p){var e=document.createElementNS(ns,"path");e.setAttribute("d",p[0]);e.setAttribute("fill",p[1]);host.appendChild(e);});
})();
</script>
</body></html>
